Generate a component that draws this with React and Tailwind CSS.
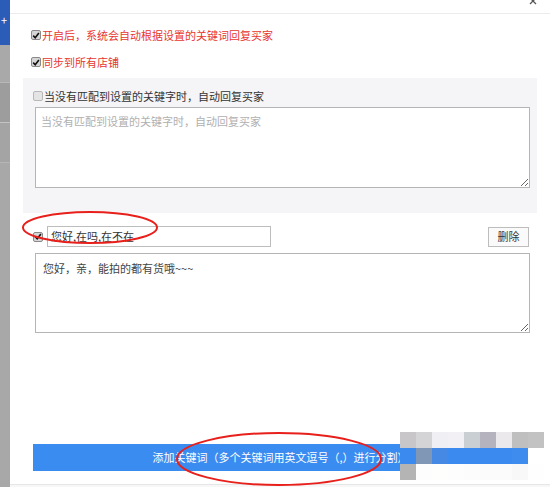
import React from "react";

const font = { fontFamily: '"Noto Sans CJK SC", "Noto Sans", sans-serif' };

function Box({ checked }) {
  return (
    <span
      className={
        "flex h-[10px] w-[10px] shrink-0 items-center justify-center rounded-[2px] border " +
        (checked ? "border-[#8a8a8a] bg-[#d6d6d6]" : "border-[#b8b8b8] bg-[#e4e4e4]")
      }
    >
      {checked && (
        <svg width="9" height="9" viewBox="0 0 10 10">
          <path d="M1.5 5.2 L4 7.8 L8.6 1.8" fill="none" stroke="#111" strokeWidth="2" />
        </svg>
      )}
    </span>
  );
}

const mosaic = [
  ["#c9c6c9", "#d4d4d6", "#f0f0f4", "#f2f0f5", "#c9cfd2", "#b5b3be", "#ebe9ec", "#bfbfbf", "#c2c2c2"],
  ["#3a8af0", "#8097b5", "#4589e5", "#3b8af0", "#3a8af0", "#3a8af0", "#3a8af0", "#3d8cee", "#ffffff"],
  ["#b4b4b4", "#fdfdfd", "#fefefc", "#fdfdfd", "#fcfcfc", "#fbfbfb", "#fbfbfb", "#f8f8f8", "#fefefe"],
];

export default function App() {
  return (
    <div className="relative flex h-[487px] w-[550px] overflow-hidden bg-white" style={font}>
      {/* background page strip */}
      <div className="flex w-[10px] shrink-0 flex-col bg-[#a8a8a8]">
        <div className="flex h-[45px] items-center bg-[#2b5cb8]">
          <span className="ml-[1px] mt-[-4px] text-[11px] leading-none text-white">+</span>
        </div>
        <div className="h-[38px] border-b border-[#b8b8b8] bg-[#a9a9a9]" />
        <div className="h-[40px] border-b border-[#c4c4c4] bg-[#9d9d9d]" />
        <div className="h-[40px] border-b border-[#b5b5b5] bg-[#a4a4a4]" />
        <div className="flex-1 bg-[#a8a8a8]" />
      </div>

      {/* dialog */}
      <div className="flex flex-1 flex-col">
        <div className="flex h-[14px] shrink-0 items-start justify-end border-b border-[#ececec] pr-[13px]">
          <svg width="8" height="8" viewBox="0 0 8 8" className="mt-[-3px]">
            <path d="M1 1 L7 7 M7 1 L1 7" stroke="#555" strokeWidth="1.3" />
          </svg>
        </div>

        <div className="flex flex-1 flex-col px-[13px]">
          <div className="mt-[14px] flex h-[14px] items-center gap-[1px] pl-[8px] text-[11px] text-[#e8362f]">
            <Box checked />
            <span>开启后，系统会自动根据设置的关键词回复买家</span>
          </div>
          <div className="mt-[13px] flex h-[14px] items-center gap-[1px] pl-[8px] text-[11px] text-[#e8362f]">
            <Box checked />
            <span>同步到所有店铺</span>
          </div>

          <div className="mt-[9px] flex h-[135px] flex-col bg-[#f5f5f7] pl-[10px] pr-[7px] pt-[11px]">
            <div className="flex h-[14px] items-center gap-[1px] text-[11px] text-[#333]">
              <Box />
              <span>当没有匹配到设置的关键字时，自动回复买家</span>
            </div>
            <textarea
              readOnly
              placeholder="当没有匹配到设置的关键字时，自动回复买家"
              className="ml-[2px] mt-[4px] h-[81px] w-auto border border-[#b5b5b5] bg-white px-[5px] pt-[5px] text-[11px] leading-[16px] text-[#333] outline-none placeholder:text-[#b0b0b0]"
              style={font}
            />
          </div>

          <div className="mt-[13px] flex h-[21px] items-center pl-[10px] pr-[8px]">
            <Box checked />
            <div className="ml-[4px] flex h-[21px] w-[224px] items-center border border-[#bdbdbd] bg-white pl-[3px] text-[11px] text-[#333]">
              您好,在吗,在不在
            </div>
            <div className="flex-1" />
            <div className="flex h-[20px] w-[41px] items-center justify-center border border-[#bdbdbd] bg-[#fafafa] text-[11px] text-[#333]">
              删除
            </div>
          </div>

          <textarea
            readOnly
            value="您好，亲，能拍的都有货哦~~~"
            className="ml-[12px] mr-[7px] mt-[6px] h-[80px] border border-[#b5b5b5] bg-white px-[7px] pt-[6px] text-[11px] leading-[16px] text-[#444] outline-none"
            style={font}
          />

          <div className="mb-[13px] ml-[10px] mr-[9px] mt-auto flex h-[27px] items-center justify-center bg-[#3a8cf0] text-[11px] text-white">
            添加关键词（多个关键词用英文逗号（,）进行分割）
          </div>
        </div>
        <div className="h-[3px] shrink-0 border-t border-[#e6e6e6] bg-[#f7f7f7]" />
      </div>

      {/* mosaic watermark overlay */}
      <div className="absolute left-[400px] top-[432px] flex flex-col">
        {mosaic.map((row, i) => (
          <div key={i} className="flex">
            {row.map((c, j) => (
              <div key={j} className="h-[16px] w-[16px]" style={{ backgroundColor: c }} />
            ))}
          </div>
        ))}
      </div>

      {/* red annotation ellipses */}
      <svg className="pointer-events-none absolute left-0 top-0" width="550" height="487">
        <ellipse cx="90" cy="227.5" rx="67" ry="15.5" fill="none" stroke="#e8201c" strokeWidth="2" />
        <ellipse cx="279" cy="459" rx="102" ry="26" fill="none" stroke="#e8201c" strokeWidth="2" />
      </svg>
    </div>
  );
}
